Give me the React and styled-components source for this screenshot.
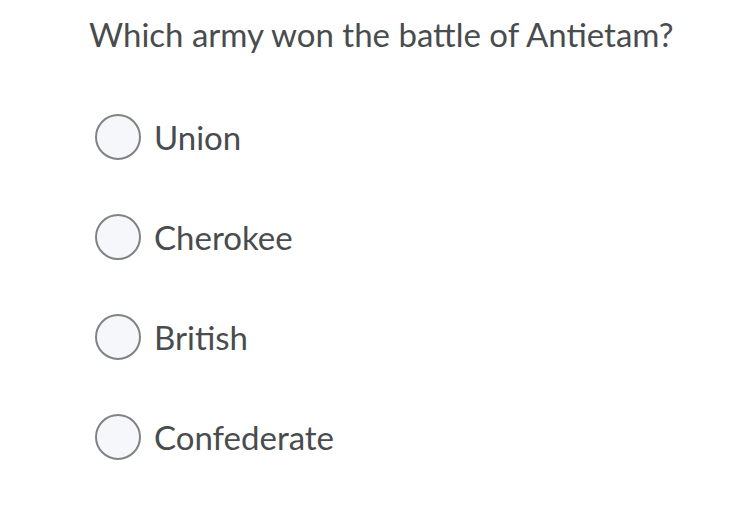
import React from 'react'
import styled, { createGlobalStyle } from 'styled-components'

const GlobalStyle = createGlobalStyle`
  body {
    margin: 0;
    background: #ffffff;
    font-family: Lato, "Open Sans", sans-serif;
    color: #494c4e;
  }
`

const options = ['Union', 'Cherokee', 'British', 'Confederate']

const App = () => {
  return (
    <Page>
      <GlobalStyle />
      <Question>Which army won the battle of Antietam?</Question>
      <OptionList>
        {options.map((label) => (
          <Option key={label}>
            <Radio />
            <Label>{label}</Label>
          </Option>
        ))}
      </OptionList>
    </Page>
  )
}

export default App

const Page = styled.div`
  width: 750px;
  height: 530px;
  padding: 12px 0 0 89px;
  box-sizing: border-box;
`

const Question = styled.h1`
  margin: 0;
  font-size: 33px;
  font-weight: 400;
  line-height: 44px;
`

const OptionList = styled.div`
  display: flex;
  flex-direction: column;
  gap: 54px;
  margin-top: 58px;
  padding-left: 6px;
`

const Option = styled.label`
  display: flex;
  align-items: center;
  gap: 13px;
  height: 46px;
`

const Radio = styled.span`
  width: 42px;
  height: 42px;
  border-radius: 50%;
  border: 2px solid #808284;
  background: #f6f7fb;
  flex-shrink: 0;
`

const Label = styled.span`
  font-size: 33px;
  line-height: 44px;
`
